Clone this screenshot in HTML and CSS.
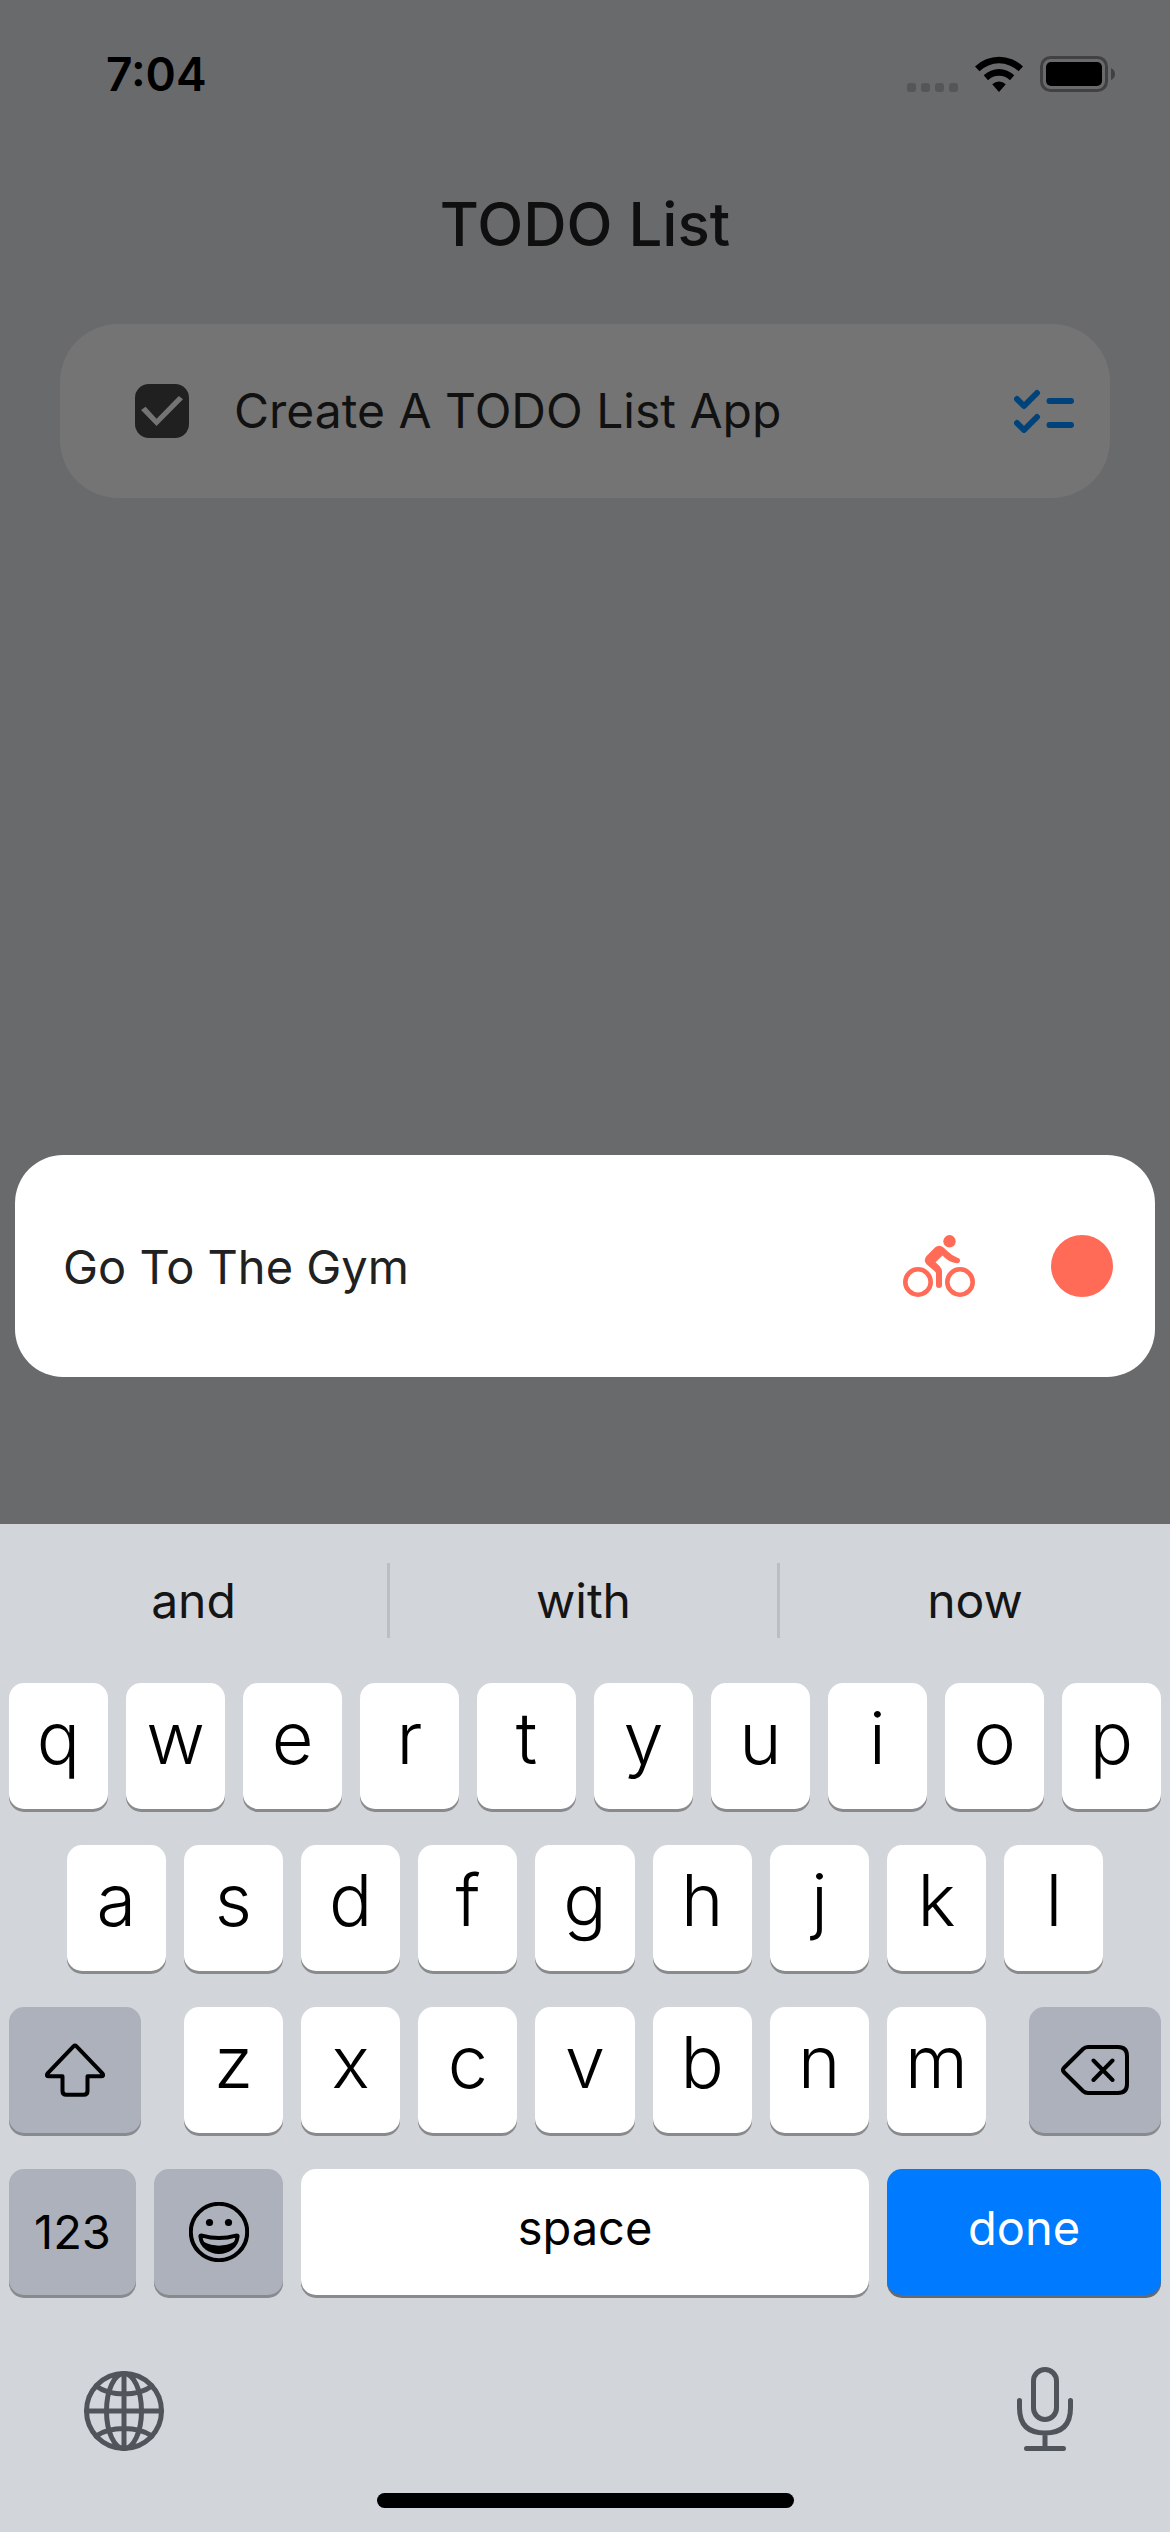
FILE: index.html
```html
<!DOCTYPE html>
<html lang="en">
<head>
<meta charset="utf-8">
<meta name="viewport" content="width=device-width, initial-scale=1">
<title>TODO List</title>
<link rel="stylesheet" href="styles.css">
</head>
<body>
<div class="screen">
  <header class="status">
    <time class="clock">7:04</time>
    <div class="status-icons">
      <svg class="dots" viewBox="0 0 51 36" aria-hidden="true"><rect y="27" width="9" height="9" rx="3"/><rect x="14" y="27" width="9" height="9" rx="3"/><rect x="28" y="27" width="9" height="9" rx="3"/><rect x="42" y="27" width="9" height="9" rx="3"/></svg>
      <svg class="wifi" viewBox="0 0 48 36" aria-hidden="true"><path d="M0 10.5A34.500 34.500 0 0 1 48 10.500L43.500 15.200A28.200 28.200 0 0 0 4.500 15.200Z"/><path d="M8.700 19.200A22.200 22.200 0 0 1 39.300 19.200L35 24.200A15.900 15.900 0 0 0 13 24.200Z"/><path d="M17.200 28.200A10 10 0 0 1 30.800 28.200L24 36Z"/></svg>
      <svg class="battery" viewBox="0 0 75 36" aria-hidden="true"><rect class="shell" x="1.500" y="1.500" width="65" height="33" rx="9"/><rect x="6" y="6" width="56" height="24" rx="5"/><path class="nub" d="M71 12q4 2 4 6t-4 6z"/></svg>
    </div>
  </header>

  <main class="content">
    <h1 class="title">TODO List</h1>
    <ul class="list">
      <li class="task">
        <input class="tick" type="checkbox" id="task-1" checked>
        <label class="task-name" for="task-1">Create A TODO List App</label>
        <svg class="task-icon" viewBox="0 0 60 44" aria-hidden="true"><path d="M3 10l7 7L23 4M3 34l7 7L23 28M35.500 12H57M35.500 36H57"/></svg>
      </li>
    </ul>
    <form class="composer">
      <input class="entry" type="text" value="Go To The Gym" aria-label="New task">
      <button class="tool" type="button" aria-label="Choose icon">
        <svg class="bike" viewBox="0 0 72 62" aria-hidden="true"><circle class="wheel" cx="15" cy="47" r="12.700"/><circle class="wheel" cx="57" cy="47" r="12.700"/><circle cx="46.500" cy="6.300" r="6.200"/><path d="M32 12.500Q36 9 40.500 12.500L44 15.800Q49 21 55 23Q57.500 23.600 57 26Q56.500 28.700 53.500 28.300Q45 27 39.500 20.600L32.500 27.200L36.500 31Q39 33.500 39 37V50Q39 53 36 53Q33 53 33 50V38.500Q33 37.500 32 36.600L23.500 29.300Q20 25.500 23.500 21Z"/></svg>
      </button>
      <button class="tool" type="button" aria-label="Choose colour"><span class="swatch"></span></button>
    </form>
  </main>

  <section class="keyboard" aria-label="Keyboard">
    <div class="suggestions">
      <button class="suggestion">and</button>
      <button class="suggestion">with</button>
      <button class="suggestion">now</button>
    </div>
    <div class="keys">
      <div class="row">
        <button class="key">q</button><button class="key">w</button><button class="key">e</button><button class="key">r</button><button class="key">t</button><button class="key">y</button><button class="key">u</button><button class="key">i</button><button class="key">o</button><button class="key">p</button>
      </div>
      <div class="row row-home">
        <button class="key">a</button><button class="key">s</button><button class="key">d</button><button class="key">f</button><button class="key">g</button><button class="key">h</button><button class="key">j</button><button class="key">k</button><button class="key">l</button>
      </div>
      <div class="row row-shift">
        <button class="key dark" aria-label="Shift"><svg class="glyph" width="60" height="54" viewBox="0 0 60 54"><path d="M28.700 3.200Q30 1.900 31.300 3.200L57.400 30.300Q59.400 33.300 56 33.300H42.500V48Q42.500 51.800 38.700 51.800H21.300Q17.500 51.800 17.500 48V33.300H4Q.6 33.300 2.600 30.300Z"/></svg></button>
        <div class="letters">
          <button class="key">z</button><button class="key">x</button><button class="key">c</button><button class="key">v</button><button class="key">b</button><button class="key">n</button><button class="key">m</button>
        </div>
        <button class="key dark" aria-label="Delete"><svg class="glyph" width="68" height="50" viewBox="0 0 68 50"><path d="M22 4Q24.200 2 27 2H57Q66 2 66 11V39Q66 48 57 48H27Q24.200 48 22 46L2.800 27Q1.200 25 2.800 23ZM32.500 15.500L51.500 35M51.500 15.500L32.500 35"/></svg></button>
      </div>
      <div class="row row-space">
        <button class="key dark word">123</button>
        <button class="key dark" aria-label="Emoji"><svg class="glyph" width="60" height="60" viewBox="0 0 60 60"><circle cx="30" cy="30" r="28.200"/><path d="M11.500 35Q10.800 33.200 13 33.600Q30 38.500 47 33.600Q49.200 33.200 48.500 35C46 55 14 55 11.500 35Z"/><path class="solid" d="M14.500 39.800Q30 47.500 45.500 39.800C42 53 18 53 14.500 39.800Z"/><circle class="solid" cx="20.500" cy="20.500" r="3.600"/><circle class="solid" cx="39.500" cy="20.500" r="3.600"/></svg></button>
        <button class="key label">space</button>
        <button class="key label done">done</button>
      </div>
    </div>
    <div class="dock">
      <button class="dock-button" aria-label="Next keyboard"><svg class="dock-icon" width="80" height="80" viewBox="0 0 80 80"><circle cx="40" cy="40" r="37.500"/><ellipse cx="40" cy="40" rx="17.500" ry="37.500"/><path d="M40 2.500V77.500M2.500 40H77.500M12 15Q23 23 40 23T68 15M12 65Q23 57.500 40 57.500T68 65"/></svg></button>
      <button class="dock-button" aria-label="Dictate"><svg class="dock-icon" width="56" height="84" viewBox="0 0 56 84"><rect x="16.500" y="2.500" width="23" height="50" rx="11.500"/><path d="M2.500 33.500V41Q2.500 66 28 66T53.500 41V33.500M28 66V81.500M9.500 81.500H46.500"/></svg></button>
    </div>
    <div class="home-bar"></div>
  </section>
</div>
</body>
</html>
```
FILE: styles.css
```css
* { box-sizing: border-box; }

body {
  margin: 0;
  font-family: Inter, "Liberation Sans", sans-serif;
  color: #000;
}

button,
input {
  margin: 0;
  padding: 0;
  border: 0;
  background: none;
  font: inherit;
  color: inherit;
}

svg { display: block; }

.screen {
  display: flex;
  flex-direction: column;
  min-height: 100vh;
  background: #696a6c;
}

/* Status bar */
.status {
  display: flex;
  justify-content: space-between;
  padding: 44px 55px 0 106px;
  height: 144px;
}

.clock {
  font-size: 46px;
  line-height: 60px;
  font-weight: 600;
}

.status-icons {
  display: flex;
  align-items: center;
  gap: 17px;
  height: 60px;
}

.dots { width: 51px; height: 36px; fill: #555658; }
.wifi { width: 48px; height: 36px; }
.battery { width: 75px; height: 36px; }
.shell { fill: none; stroke: #414143; stroke-width: 3; }
.nub { fill: #414143; }

/* Page */
.content {
  flex: 1;
  display: flex;
  flex-direction: column;
}

.title {
  margin: 40px 0 60px;
  font-size: 60px;
  line-height: 80px;
  font-weight: 500;
  text-align: center;
  color: #0f0f0f;
}

.list {
  margin: 0 60px;
  padding: 0;
  list-style: none;
}

.task {
  display: flex;
  align-items: center;
  height: 174px;
  padding: 0 36px 0 75px;
  border-radius: 58px;
  background: #747474;
}

.tick {
  appearance: none;
  display: grid;
  width: 54px;
  height: 54px;
  border-radius: 14px;
  background: #202020;
}

.tick:checked::before {
  content: "";
  place-self: center;
  width: 42px;
  height: 30px;
  background: #747474;
  clip-path: polygon(0 47%, 11% 36%, 37% 76%, 90% 0, 100% 11%, 37% 100%);
}

.task-name {
  flex: 1;
  padding-left: 45px;
  font-size: 48px;
  line-height: 60px;
  color: #111;
}

.task-icon {
  width: 60px;
  height: 44px;
  fill: none;
  stroke: #00437a;
  stroke-width: 6;
  stroke-linecap: round;
  stroke-linejoin: round;
}

.composer {
  display: flex;
  align-items: center;
  gap: 76px;
  height: 222px;
  margin: auto 15px 147px;
  padding: 0 42px 0 48px;
  border-radius: 48px;
  background: #fff;
}

.entry {
  flex: 1;
  min-width: 0;
  height: 60px;
  font-size: 47px;
  color: #212121;
  outline: 0;
}

.bike { width: 72px; height: 62px; fill: #ff6b57; }
.wheel { fill: none; stroke: #ff6b57; stroke-width: 4.600; }

.swatch {
  display: block;
  width: 62px;
  height: 62px;
  border-radius: 50%;
  background: #ff6b57;
}

/* Keyboard */
.keyboard {
  padding: 39px 0 24px;
  background: #d2d5da;
}

.suggestions {
  display: grid;
  grid-template-columns: repeat(3, 1fr);
  height: 75px;
}

.suggestion {
  font-size: 48px;
  line-height: 72px;
  color: #151515;
}

.suggestion:not(:last-child) { border-right: 3px solid #bbbec3; }

.keys {
  display: grid;
  gap: 36px;
  padding: 45px 9px 0;
}

.row {
  display: grid;
  grid-template-columns: repeat(10, 1fr);
  gap: 18px;
}

.row-home {
  grid-template-columns: repeat(9, 1fr);
  padding: 0 5%;
}

.row-shift {
  grid-template-columns: 132fr 802fr 132fr;
  gap: 43px;
}

.letters {
  display: grid;
  grid-template-columns: repeat(7, 1fr);
  gap: 18px;
}

.row-space { grid-template-columns: 127fr 129fr 568fr 274fr; }

.key {
  display: flex;
  align-items: center;
  justify-content: center;
  height: 126px;
  padding-bottom: 16px;
  border-radius: 15px;
  background: #fff;
  box-shadow: 0 3px 0 #898a8d;
  font-size: 72px;
  line-height: 84px;
  font-weight: 300;
}

.dark {
  padding-bottom: 0;
  background: #adb1bc;
}

.word,
.label {
  font-size: 47px;
  line-height: 60px;
  font-weight: 400;
}

.label { padding-bottom: 8px; }

.done {
  background: #007aff;
  color: #fff;
  box-shadow: 0 3px 0 #68696e;
}

.glyph {
  fill: none;
  stroke: #000;
  stroke-width: 4;
  stroke-linecap: round;
  stroke-linejoin: round;
}

.solid { fill: #000; stroke: none; }

.dock {
  display: flex;
  align-items: flex-end;
  justify-content: space-between;
  height: 84px;
  margin: 72px 0 42px;
  padding: 0 97px 0 84px;
}

.dock-icon {
  fill: none;
  stroke: #50555b;
  stroke-width: 5;
  stroke-linecap: round;
}

.home-bar {
  width: 417px;
  height: 15px;
  margin: 0 auto;
  border-radius: 8px;
  background: #000;
}
```
